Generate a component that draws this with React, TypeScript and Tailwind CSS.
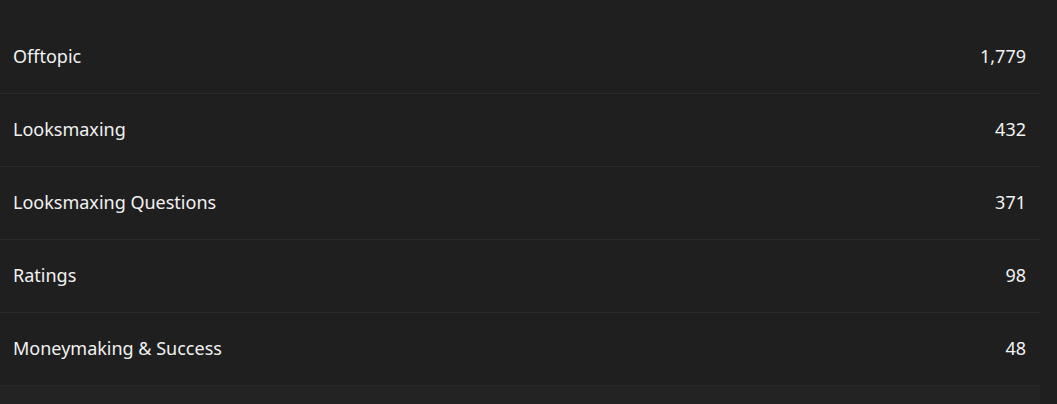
import React from 'react';

const rows = [
  { name: 'Offtopic', count: '1,779' },
  { name: 'Looksmaxing', count: '432' },
  { name: 'Looksmaxing Questions', count: '371' },
  { name: 'Ratings', count: '98' },
  { name: 'Moneymaking & Success', count: '48' },
];

export default function App(): React.JSX.Element {
  return (
    <div className="min-h-[404px] bg-[#1f1f1f] font-['Noto_Sans',sans-serif] text-[#f2f2f2]">
      <div className="w-[1040px] pt-[21px]">
        {rows.map((r) => (
          <div
            key={r.name}
            className="flex h-[73px] items-center justify-between border-b border-[#2a2a2a] pb-[2px] pl-[13px] pr-[14px] text-[18px]"
          >
            <span>{r.name}</span>
            <span>{r.count}</span>
          </div>
        ))}
        <div className="h-[20px] bg-[#232323]" />
      </div>
    </div>
  );
}
